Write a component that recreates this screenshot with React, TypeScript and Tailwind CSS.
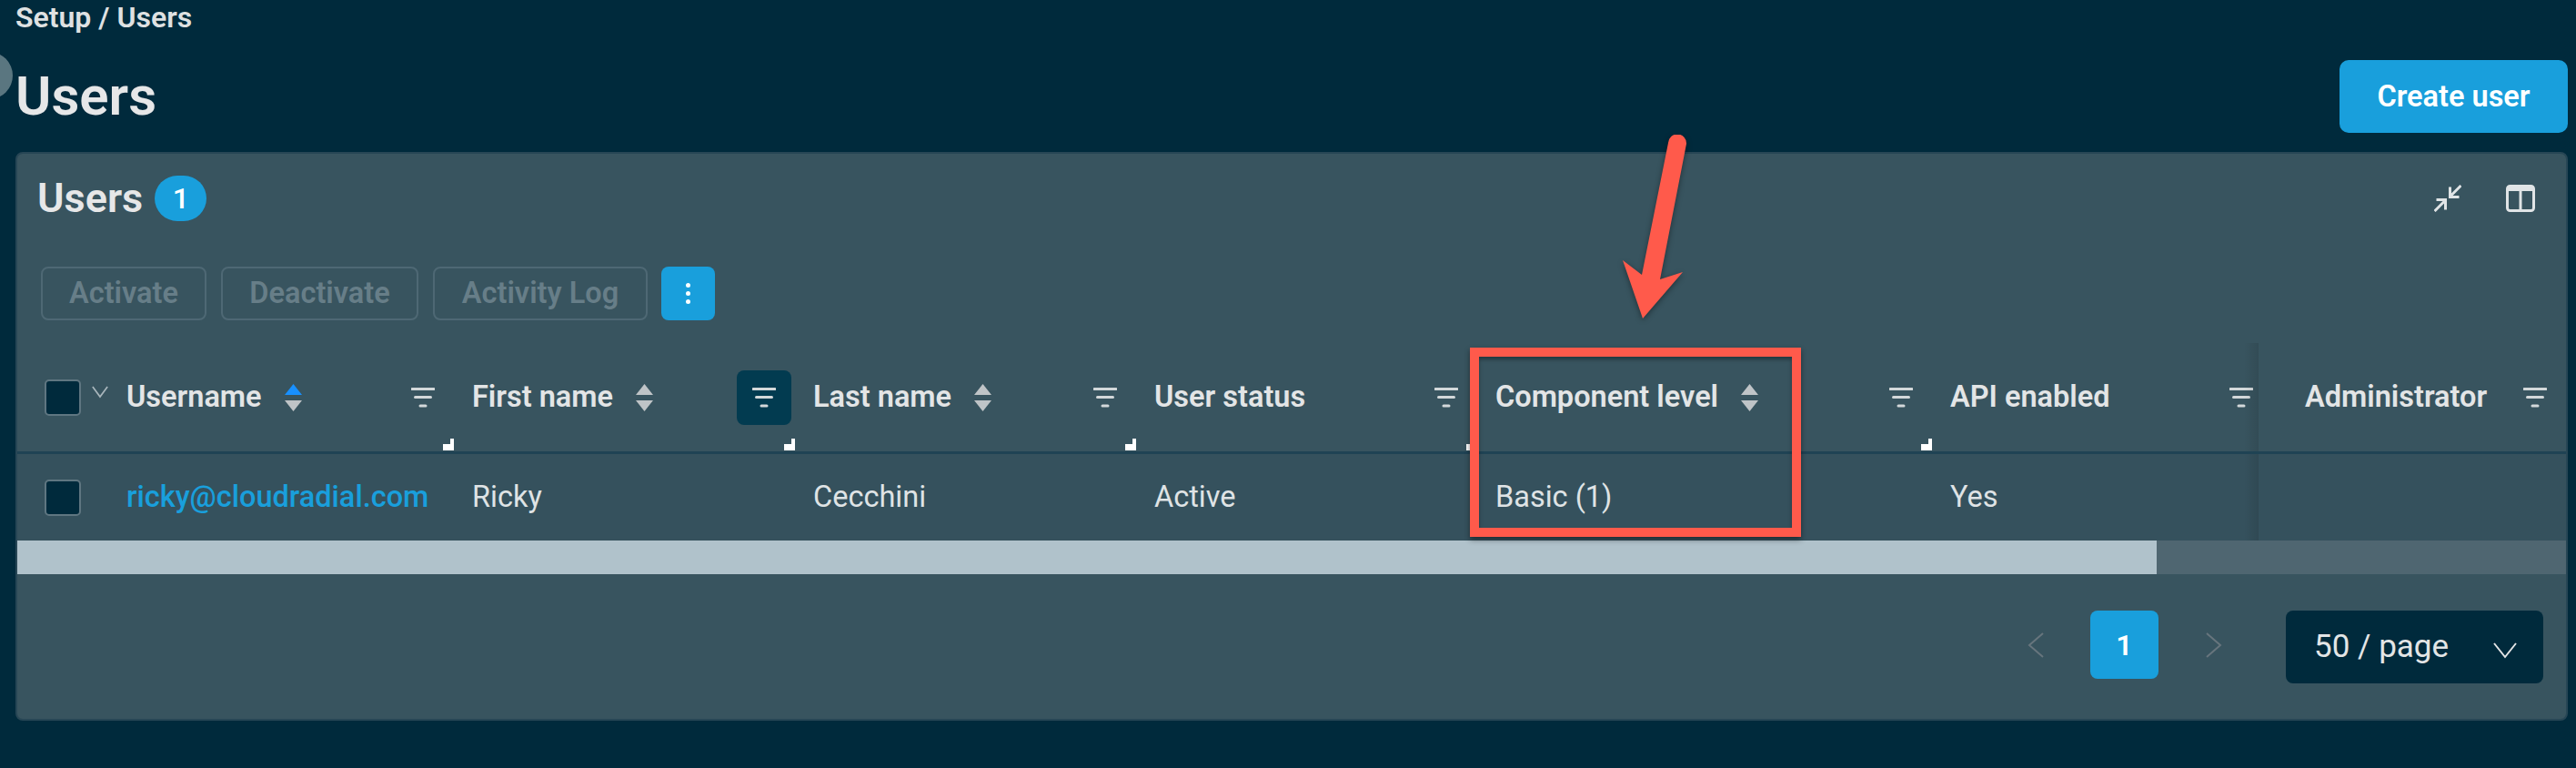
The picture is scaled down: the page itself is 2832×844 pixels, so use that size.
const gridCols = "grid grid-cols-[100px_380px_375px_375px_375px_500px_359px_338px]";

function FilterIcon() {
  return (
    <svg width="26" height="22" viewBox="0 0 26 22" className="text-[#d3d8da]">
      <path d="M1 1.5h24M4.5 10.5h17M10 20h6" stroke="currentColor" strokeWidth="3" strokeLinecap="round" fill="none" />
    </svg>
  );
}

function SortIcon({ active }: { active?: boolean }) {
  return (
    <svg width="19" height="30" viewBox="0 0 19 30" className="ml-[25px] shrink-0">
      <path d="M9.5 0L19 12H0z" fill={active ? "#1890ff" : "#bfc4c7"} />
      <path d="M0 18h19L9.5 30z" fill="#bfc4c7" />
    </svg>
  );
}

function Chevron({ className, d, w, h }: { className: string; d: string; w: number; h: number }) {
  return (
    <svg width={w} height={h} viewBox={`0 0 ${w} ${h}`} className={className}>
      <path d={d} fill="none" stroke="currentColor" strokeWidth="2" />
    </svg>
  );
}

function Checkbox() {
  return <div className="h-10 w-10 shrink-0 rounded-[5px] border-2 border-[#5f7681] bg-[#002a3c]" />;
}

function FixedShadow() {
  return <div className="absolute top-0 right-full h-full w-4 bg-linear-to-r from-transparent to-[#0000001a]" />;
}

function HeaderCell({
  label,
  sort,
  active,
  handle,
  fixed,
  filterClass = "",
}: {
  label: string;
  sort?: "on" | "off";
  active?: boolean;
  handle?: boolean;
  fixed?: boolean;
  filterClass?: string;
}) {
  return (
    <div className={`relative flex items-center ${fixed ? "pl-[51px]" : "pl-5"} pr-1`}>
      {fixed && <FixedShadow />}
      <span className="text-[32.5px] font-semibold text-[#e3e5e6] whitespace-nowrap">{label}</span>
      {sort && <SortIcon active={sort === "on"} />}
      <div className={`ml-auto flex h-[60px] w-[60px] items-center justify-center rounded-lg ${active ? "bg-[#023b50]" : ""} ${filterClass}`}>
        <FilterIcon />
      </div>
      {handle && <div className="absolute right-0 bottom-[1px] h-[13px] w-3 border-r-4 border-b-[7px] border-white" />}
    </div>
  );
}

function BodyCell({ children, className = "text-[#dfe3e5]" }: { children?: React.ReactNode; className?: string }) {
  return <div className={`flex items-center pl-5 text-[32.5px] ${className}`}>{children}</div>;
}

export default function App() {
  return (
    <div className="relative h-[844px] w-[2832px] overflow-hidden bg-[#002a3c] font-['Roboto',sans-serif]">
      {/* sidebar toggle peeking in from the left */}
      <div className="absolute top-[57px] -left-[38px] h-[52px] w-[52px] rounded-full bg-[#5a7680]" />

      <div className="pl-[17px] pr-[9px]">
        <div className="h-10 text-[32px] leading-[38px] font-semibold text-[#dfe1e2]">Setup / Users</div>

        <div className="mt-[26px] flex h-20 items-center justify-between">
          <h1 className="text-[60px] font-semibold text-[#e6e7e8]">Users</h1>
          <button className="h-20 w-[251px] rounded-[10px] bg-[#199fdc] text-[32.5px] font-semibold text-white">Create user</button>
        </div>

        <div className="mt-[21px] h-[625px] rounded-lg border-2 border-[#274655] bg-[#38545f]">
          <div className="mt-6 flex h-[50px] items-center justify-between pl-[22px] pr-[34px]">
            <div className="flex items-center">
              <span className="text-[45px] font-semibold text-[#e6e7e8]">Users</span>
              <span className="ml-[13px] flex h-[50px] w-[57px] items-center justify-center rounded-full bg-[#199fdc] text-[32px] font-medium text-white">1</span>
            </div>
            <div className="flex items-center gap-[49px] text-[#e0e4e6]">
              <svg width="30" height="30" viewBox="0 0 30 30" fill="none" stroke="currentColor" strokeWidth="3">
                <path d="M29.5 1L18 12.5M17.5 2.5v11h10M.5 29L12 17.5M12.5 27.5v-11h-10" />
              </svg>
              <svg width="32" height="30" viewBox="0 0 32 30" fill="none" stroke="currentColor" strokeWidth="3">
                <rect x="1.5" y="1.5" width="29" height="27" rx="3" />
                <path d="M16 6v22" />
                <path d="M2 4h28" strokeWidth="6" />
              </svg>
            </div>
          </div>

          <div className="mt-[50px] flex h-[59px] items-stretch pl-[26px] text-[32.5px] font-semibold text-[#677e88]">
            <div className="flex w-[182px] items-center justify-center rounded-lg border-2 border-[#4e6874]">Activate</div>
            <div className="ml-4 flex w-[217px] items-center justify-center rounded-lg border-2 border-[#4e6874]">Deactivate</div>
            <div className="ml-4 flex w-[236px] items-center justify-center rounded-lg border-2 border-[#4e6874]">Activity Log</div>
            <div className="ml-[15px] flex w-[59px] flex-col items-center justify-center gap-1 rounded-lg bg-[#199fdc]">
              <span className="h-[5px] w-[5px] rounded-full bg-white" />
              <span className="h-[5px] w-[5px] rounded-full bg-white" />
              <span className="h-[5px] w-[5px] rounded-full bg-white" />
            </div>
          </div>

          <div className={`mt-[25px] h-[122px] border-b-[3px] border-[#1f4354] ${gridCols}`}>
            <div className="flex items-center pl-[30px]">
              <Checkbox />
              <Chevron className="mb-3 ml-3 text-[#a9b6bc]" w={21} h={15} d="M1 1l9.5 13L20 1" />
            </div>
            <HeaderCell label="Username" sort="on" handle />
            <HeaderCell label="First name" sort="off" active handle />
            <HeaderCell label="Last name" sort="off" handle />
            <HeaderCell label="User status" handle />
            <HeaderCell label="Component level" sort="off" handle />
            <HeaderCell label="API enabled" filterClass="-mr-[15px]" />
            <HeaderCell label="Administrator" fixed />
          </div>

          <div className={`h-[95px] bg-[#35515d] ${gridCols}`}>
            <div className="flex items-center pl-[30px]">
              <Checkbox />
            </div>
            <BodyCell className="font-medium text-[#199fdc]">ricky@cloudradial.com</BodyCell>
            <BodyCell>Ricky</BodyCell>
            <BodyCell>Cecchini</BodyCell>
            <BodyCell>Active</BodyCell>
            <BodyCell>Basic (1)</BodyCell>
            <BodyCell>Yes</BodyCell>
            <div className="relative">
              <FixedShadow />
            </div>
          </div>

          <div className="h-[37px] bg-[#4f6671]">
            <div className="h-full w-[2352px] bg-[#b0c2cb]" />
          </div>

          <div className="mt-10 flex items-start justify-end gap-[23px] pr-[25px]">
            <div className="flex h-[75px] w-[75px] items-center justify-center text-[#67757d]">
              <Chevron className="" w={18} h={28} d="M17 1L2 14l15 13" />
            </div>
            <div className="flex h-[75px] w-[75px] items-center justify-center rounded-lg bg-[#199fdc] text-[32px] font-semibold text-white">1</div>
            <div className="flex h-[75px] w-[75px] items-center justify-center text-[#67757d]">
              <Chevron className="" w={18} h={28} d="M1 1l15 13L1 27" />
            </div>
            <div className="ml-[19px] flex h-20 w-[283px] items-center justify-between rounded-lg bg-[#002a3c] pl-[31px] pr-[29px] text-[35px] text-[#e3e5e6]">
              <span>50 / page</span>
              <Chevron className="mt-[8px]" w={26} h={18} d="M1 1l12 15L25 1" />
            </div>
          </div>
        </div>
      </div>

      {/* red annotation */}
      <div className="absolute top-[382px] left-[1616px] h-[208px] w-[364px] border-[10px] border-[#ff5a4b] shadow-[0_3px_6px_rgba(0,0,0,0.45),inset_0_3px_4px_rgba(0,0,0,0.35)]" />
      <svg width="90" height="210" viewBox="1775 148 90 210" className="absolute top-[148px] left-[1775px] drop-shadow-[0_2px_3px_rgba(0,0,0,0.4)]">
        <path
          d="M1834 157a10 10 0 0 1 20 1L1825 307l25-8-44 51-22-64 21 16z"
          fill="#ff5a4b"
        />
      </svg>
    </div>
  );
}
